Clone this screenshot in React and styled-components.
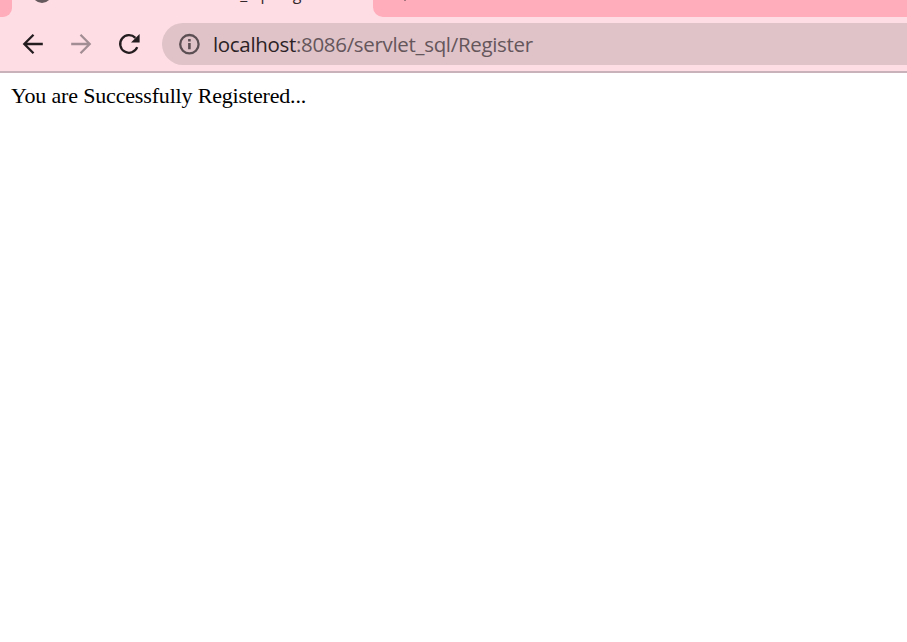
import React from "react";
import styled, { createGlobalStyle } from "styled-components";

const GlobalStyle = createGlobalStyle`
  body { margin: 0; background: #fff; overflow: hidden; }
`;

const Browser = styled.div`
  height: 642px;
  display: flex;
  flex-direction: column;
  overflow: hidden;
`;

const TabStrip = styled.div`
  height: 17px;
  flex: none;
  display: flex;
  background: #ffdde4;
  overflow: hidden;
`;

const PreviousTab = styled.div`
  width: 12px;
  flex: none;
  background: #ffacbb;
  border-bottom-right-radius: 9px;
`;

const ActiveTab = styled.div`
  width: 361px;
  flex: none;
  display: flex;
  align-items: flex-end;
  padding: 0 0 14px 20px;
  box-sizing: border-box;
`;

const Favicon = styled.svg`
  width: 20px;
  height: 20px;
  flex: none;
`;

const TabTitle = styled.span`
  margin: 0 0 -2px 27px;
  font: 16px/22px "Open Sans", sans-serif;
  letter-spacing: -0.1px;
  color: #33292c;
  white-space: nowrap;
`;

const RestOfStrip = styled.div`
  flex: 1;
  display: flex;
  align-items: flex-end;
  padding: 0 0 16px 24px;
  background: #ffacbb;
  border-bottom-left-radius: 10px;
`;

const PlusIcon = styled.svg`
  width: 16px;
  height: 16px;
  flex: none;
`;

const Toolbar = styled.div`
  height: 56px;
  flex: none;
  box-sizing: border-box;
  display: flex;
  align-items: flex-start;
  padding-top: 6px;
  background: #ffdde4;
  border-bottom: 2px solid #c9b2b9;
`;

const NavButtons = styled.div`
  width: 162px;
  height: 42px;
  flex: none;
  box-sizing: border-box;
  display: flex;
  align-items: center;
  gap: 20px;
  padding-left: 19px;
`;

const NavIcon = styled.svg`
  width: 28px;
  height: 28px;
  flex: none;
  fill: none;
  stroke: ${({ $muted }) => ($muted ? "#a18d93" : "#241d20")};
  stroke-width: 2.3;
`;

const AddressBar = styled.div`
  flex: 1;
  height: 42px;
  display: flex;
  align-items: center;
  padding-left: 16px;
  background: #dfc3c9;
  border-radius: 21px 0 0 21px;
`;

const InfoIcon = styled.svg`
  width: 22px;
  height: 22px;
  flex: none;
`;

const Url = styled.span`
  margin-left: 13px;
  font: 20.5px/28px "Open Sans", sans-serif;
  letter-spacing: -0.32px;
  color: #65565b;
  white-space: nowrap;
`;

const Host = styled.span`
  color: #2b2225;
`;

const Page = styled.main`
  flex: 1;
  padding: 10px 11px;
  background: #fff;
  font: 22px/26px "Liberation Serif", serif;
  letter-spacing: -0.17px;
  color: #000;
`;

export default function App() {
  return (
    <Browser>
      <GlobalStyle />
      <TabStrip>
        <PreviousTab />
        <ActiveTab>
          <Favicon viewBox="0 0 20 20">
            <circle cx="10" cy="10" r="10" fill="#66595d" />
          </Favicon>
          <TabTitle>localhost:8086/servlet_sql/Register</TabTitle>
        </ActiveTab>
        <RestOfStrip>
          <PlusIcon viewBox="0 0 16 16">
            <path d="M8 0v16M0 8h16" stroke="#a8747e" strokeWidth="2" />
          </PlusIcon>
        </RestOfStrip>
      </TabStrip>
      <Toolbar>
        <NavButtons>
          <NavIcon viewBox="0 0 28 28">
            <path d="M23.8 14H5.5M14.5 4.8L5.3 14l9.2 9.2" />
          </NavIcon>
          <NavIcon viewBox="0 0 28 28" $muted>
            <path d="M4.2 14h18.3M13.5 4.8l9.2 9.2-9.2 9.2" />
          </NavIcon>
          <NavIcon viewBox="0 0 28 28">
            <path d="M22.2 17.2A8.8 8.8 0 1 1 20.4 7.9" />
            <path d="M24.6 4v8.6H16z" fill="#241d20" stroke="none" />
          </NavIcon>
        </NavButtons>
        <AddressBar>
          <InfoIcon viewBox="0 0 22 22">
            <circle cx="11.4" cy="11.2" r="9.2" fill="none" stroke="#5c4f53" strokeWidth="2.3" />
            <path d="M11.4 10v6.2M11.4 6v2.4" stroke="#5c4f53" strokeWidth="2.6" />
          </InfoIcon>
          <Url>
            <Host>localhost</Host>:8086/servlet_sql/Register
          </Url>
        </AddressBar>
      </Toolbar>
      <Page>You are Successfully Registered...</Page>
    </Browser>
  );
}
